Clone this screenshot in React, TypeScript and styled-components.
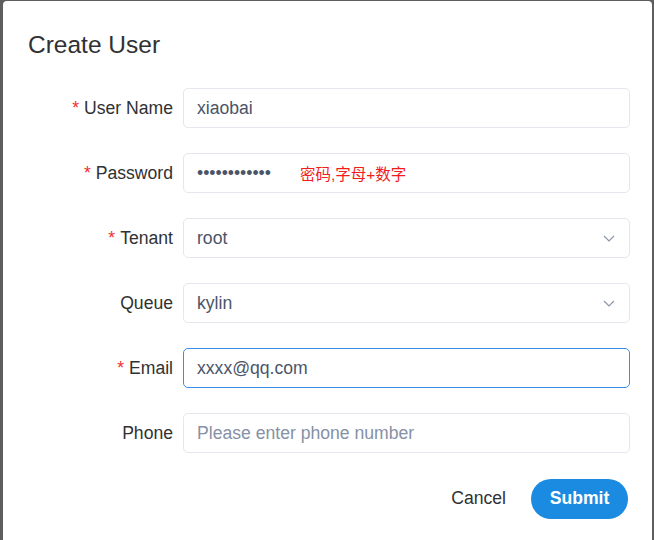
import React from "react";
import styled, { createGlobalStyle } from "styled-components";

const GlobalStyle = createGlobalStyle`
  html, body {
    margin: 0;
    padding: 0;
    background: #5e5e5e;
    height: 540px;
    overflow: hidden;
    font-family: "Liberation Sans", Arial, sans-serif;
  }
`;

interface Field {
  label: string;
  required?: boolean;
  value?: string;
  placeholder?: string;
  kind?: "text" | "password" | "select";
  focused?: boolean;
  hint?: string;
}

const fields: Field[] = [
  { label: "User Name", required: true, value: "xiaobai" },
  { label: "Password", required: true, value: "••••••••••••", kind: "password", hint: "密码,字母+数字" },
  { label: "Tenant", required: true, value: "root", kind: "select" },
  { label: "Queue", value: "kylin", kind: "select" },
  { label: "Email", required: true, value: "xxxx@qq.com", focused: true },
  { label: "Phone", placeholder: "Please enter phone number" },
];

const Dialog = styled.div`
  margin: 1px 2px 0 3px;
  height: 560px;
  background: #fff;
  border-radius: 4px 4px 0 0;
  box-sizing: border-box;
`;

const Header = styled.div`
  padding: 27px 25px 0;
  height: 87px;
  box-sizing: border-box;
  font-size: 24.5px;
  color: #303133;
  line-height: 34px;
`;

const Form = styled.div`
  display: flex;
  flex-direction: column;
  gap: 25px;
  padding: 0 22px 0 0;
`;

const Row = styled.div`
  display: flex;
  align-items: center;
  height: 40px;
`;

const Label = styled.div`
  width: 180px;
  padding-right: 10px;
  box-sizing: border-box;
  text-align: right;
  font-size: 17.6px;
  color: #303133;
  white-space: nowrap;
`;

const Star = styled.span`
  color: #f23030;
  margin-right: 5px;
`;

const Box = styled.div<{ $focused?: boolean }>`
  flex: 1;
  height: 40px;
  box-sizing: border-box;
  border: 1px solid ${p => (p.$focused ? "#3a8ee6" : "#e4e7ed")};
  border-radius: 5px;
  display: flex;
  align-items: center;
  padding: 0 14px 0 13px;
  font-size: 17.6px;
  color: #4a5568;
`;

const Value = styled.span<{ $placeholder?: boolean }>`
  flex: 1;
  color: ${p => (p.$placeholder ? "#8691a5" : "#4a5568")};
`;

const Dots = styled.span`
  font-size: 17.6px;
  color: #4a5568;
  width: 103px;
`;

const Hint = styled.span`
  flex: 1;
  color: #f21c1c;
  font-size: 15.5px;
  font-family: "Liberation Sans", "Noto Sans CJK SC", sans-serif;
`;

const Chevron = styled.svg`
  width: 12px;
  height: 12px;
`;

const Actions = styled.div`
  display: flex;
  justify-content: flex-end;
  align-items: center;
  gap: 25px;
  padding: 26px 24px 0 0;
`;

const CancelButton = styled.button`
  border: none;
  background: none;
  font-family: inherit;
  font-size: 17.6px;
  color: #303133;
  padding: 0 0 2px;
`;

const SubmitButton = styled.button`
  border: none;
  background: #1a8be0;
  color: #fff;
  font-family: inherit;
  font-size: 17.6px;
  font-weight: bold;
  width: 97px;
  height: 40px;
  padding: 0 0 1px;
  border-radius: 20px;
`;

const FieldRow = ({ field }: { field: Field }) => (
  <Row>
    <Label>
      {field.required && <Star>*</Star>}
      {field.label}
    </Label>
    <Box $focused={field.focused}>
      {field.kind === "password" ? (
        <>
          <Dots>{field.value}</Dots>
          <Hint>{field.hint}</Hint>
        </>
      ) : field.value ? (
        <Value>{field.value}</Value>
      ) : (
        <Value $placeholder>{field.placeholder}</Value>
      )}
      {field.kind === "select" && (
        <Chevron viewBox="0 0 12 12">
          <path d="M1 4 L6 9 L11 4" fill="none" stroke="#8a95a8" strokeWidth="1.2" />
        </Chevron>
      )}
    </Box>
  </Row>
);

export default function App() {
  return (
    <>
      <GlobalStyle />
      <Dialog>
        <Header>Create User</Header>
        <Form>
          {fields.map(f => (
            <FieldRow key={f.label} field={f} />
          ))}
        </Form>
        <Actions>
          <CancelButton>Cancel</CancelButton>
          <SubmitButton>Submit</SubmitButton>
        </Actions>
      </Dialog>
    </>
  );
}
